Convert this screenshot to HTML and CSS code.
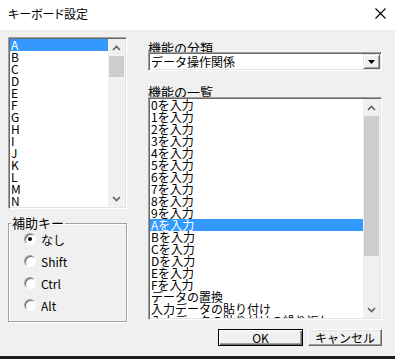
FILE: index.html
```html
<!DOCTYPE html>
<html lang="ja">
  <head>
    <meta charset="UTF-8" />
    <title>キーボード設定</title>
    <link rel="stylesheet" href="styles.css">
  </head>
  <body>
    <div class="window">
      <div class="titlebar">
        <span class="title">キーボード設定</span>
        <svg class="close" width="11" height="11" viewBox="0 0 11 11">
          <path d="M0.5 0.5 L10.5 10.5 M10.5 0.5 L0.5 10.5" stroke="#000" stroke-width="1.1" fill="none" />
        </svg>
      </div>

      <div class="client">
        <div class="left-col">
          <div class="listbox key-list">
            <ul class="items">
              <li class="selected">A</li>
              <li>B</li>
              <li>C</li>
              <li>D</li>
              <li>E</li>
              <li>F</li>
              <li>G</li>
              <li>H</li>
              <li>I</li>
              <li>J</li>
              <li>K</li>
              <li>L</li>
              <li>M</li>
              <li>N</li>
            </ul>
            <div class="vscroll">
              <div class="arrow">
                <svg width="9" height="6" viewBox="0 0 9 6"><path d="M1 5 L4.5 1.5 L8 5" stroke="#606060" stroke-width="1.6" fill="none" /></svg>
              </div>
              <div class="thumb"></div>
              <div class="track-rest"></div>
              <div class="arrow">
                <svg width="9" height="6" viewBox="0 0 9 6"><path d="M1 1 L4.5 4.5 L8 1" stroke="#606060" stroke-width="1.6" fill="none" /></svg>
              </div>
            </div>
          </div>

          <fieldset class="group">
            <legend>補助キー</legend>
            <div class="radios">
              <label class="radio-row"><span class="radio checked"></span>なし</label>
              <label class="radio-row"><span class="radio"></span>Shift</label>
              <label class="radio-row"><span class="radio"></span>Ctrl</label>
              <label class="radio-row"><span class="radio"></span>Alt</label>
            </div>
          </fieldset>
        </div>

        <div class="right-col">
          <div class="field-label">機能の分類</div>
          <div class="combo">
            <span class="combo-text">データ操作関係</span>
            <span class="combo-btn">
              <svg width="7" height="4" viewBox="0 0 7 4"><path d="M0 0 H7 L3.5 4 Z" fill="#000" /></svg>
            </span>
          </div>

          <div class="field-label second">機能の一覧</div>
          <div class="listbox func-list">
            <ul class="items">
              <li>0を入力</li>
              <li>1を入力</li>
              <li>2を入力</li>
              <li>3を入力</li>
              <li>4を入力</li>
              <li>5を入力</li>
              <li>6を入力</li>
              <li>7を入力</li>
              <li>8を入力</li>
              <li>9を入力</li>
              <li class="selected">Aを入力</li>
              <li>Bを入力</li>
              <li>Cを入力</li>
              <li>Dを入力</li>
              <li>Eを入力</li>
              <li>Fを入力</li>
              <li>データの置換</li>
              <li>入力データの貼り付け</li>
              <li>入力データの貼り付けの繰り返し</li>
            </ul>
            <div class="vscroll">
              <div class="arrow">
                <svg width="9" height="6" viewBox="0 0 9 6"><path d="M1 5 L4.5 1.5 L8 5" stroke="#606060" stroke-width="1.6" fill="none" /></svg>
              </div>
              <div class="thumb"></div>
              <div class="track-rest"></div>
              <div class="arrow">
                <svg width="9" height="6" viewBox="0 0 9 6"><path d="M1 1 L4.5 4.5 L8 1" stroke="#606060" stroke-width="1.6" fill="none" /></svg>
              </div>
            </div>
          </div>

          <div class="buttons">
            <button class="btn btn-ok">OK</button>
            <button class="btn btn-cancel">キャンセル</button>
          </div>
        </div>
      </div>
    </div>
  </body>
</html>
```

FILE: styles.css
```css
/* Reset */
* {
  margin: 0;
  padding: 0;
  box-sizing: border-box;
}

body {
  width: 395px;
  height: 359px;
  overflow: hidden;
  font-family: "Noto Sans CJK JP", sans-serif;
  color: #000;
}

.window {
  display: flex;
  flex-direction: column;
  height: 359px;
  background: #f0f0f0;
  border-bottom: 3px solid #1e1e1e;
}

/* Title bar */
.titlebar {
  height: 30px;
  background: #fff;
  display: flex;
  align-items: center;
  justify-content: space-between;
  padding: 0 9px 3px 8px;
}

.title {
  font-size: 12px;
  font-feature-settings: "palt";
}

/* Client area */
.client {
  flex: 1;
  display: flex;
  gap: 21px;
  padding: 7px 13px 0 8px;
}

.left-col {
  width: 119px;
  display: flex;
  flex-direction: column;
}

.right-col {
  flex: 1;
  display: flex;
  flex-direction: column;
}

/* Sunken list boxes */
.listbox {
  display: flex;
  background: #fff;
  border: 1px solid;
  border-color: #a0a0a0 #fff #fff #a0a0a0;
  box-shadow: inset 1px 1px #696969, inset -1px -1px #e3e3e3;
  padding: 1px;
  overflow: hidden;
}

.key-list {
  height: 172px;
}

.func-list {
  height: 223px;
}

.items {
  flex: 1;
  list-style: none;
  overflow: hidden;
  font-size: 12px;
  line-height: 12px;
}

.items li {
  height: 12px;
  padding-left: 1px;
  white-space: nowrap;
}

.items li.selected {
  background: #3399ff;
  color: #fff;
}

.vscroll {
  width: 17px;
  flex-shrink: 0;
  background: #f0f0f0;
  display: flex;
  flex-direction: column;
}

.arrow {
  height: 17px;
  display: flex;
  align-items: center;
  justify-content: center;
}

.thumb {
  margin: 0 1px;
  background: #cdcdcd;
}

.key-list .thumb {
  height: 21px;
}

.func-list .thumb {
  height: 140px;
}

.track-rest {
  flex: 1;
}

/* Group box */
.group {
  margin-top: 7px;
  height: 106px;
  border: 1px solid #a0a0a0;
  box-shadow: inset 1px 1px #fff, 1px 1px #fff;
  padding: 0 0 0 2px;
}

.group legend {
  font-size: 13px;
  line-height: 14px;
  padding: 0 1px;
}

.radios {
  margin-top: -2px;
  padding-left: 13px;
}

.radio-row {
  display: flex;
  align-items: center;
  gap: 5px;
  height: 22px;
  font-size: 12px;
}

.radio {
  width: 12px;
  height: 12px;
  border-radius: 50%;
  border: 1px solid;
  border-color: #a0a0a0 #fff #fff #a0a0a0;
  background: #fff;
  box-shadow: inset 1px 1px #696969;
  display: flex;
  align-items: center;
  justify-content: center;
}

.radio.checked::after {
  content: "";
  width: 4px;
  height: 4px;
  border-radius: 50%;
  background: #000;
}

/* Right side */
.field-label {
  font-size: 13px;
  line-height: 16px;
  height: 12px;
  margin-top: 3px;
}

.field-label.second {
  margin-top: 13px;
  margin-bottom: 1px;
}

.combo {
  display: flex;
  align-items: center;
  height: 19px;
  background: #fff;
  border: 1px solid;
  border-color: #a0a0a0 #fff #fff #a0a0a0;
  box-shadow: inset 1px 1px #696969, inset -1px -1px #e3e3e3;
  padding: 1px;
}

.combo-text {
  flex: 1;
  font-size: 12px;
  line-height: 15px;
  padding-left: 1px;
}

.combo-btn {
  width: 17px;
  height: 15px;
  background: #f0f0f0;
  border: 1px solid;
  border-color: #e3e3e3 #696969 #696969 #e3e3e3;
  box-shadow: inset 1px 1px #fff, inset -1px -1px #a0a0a0;
  display: flex;
  align-items: center;
  justify-content: center;
}

/* Buttons */
.buttons {
  display: flex;
  justify-content: flex-end;
  gap: 5px;
  margin-top: 9px;
}

.btn {
  height: 17px;
  font-family: "Noto Sans CJK JP", sans-serif;
  font-size: 12px;
  line-height: 13px;
  background: #f0f0f0;
  border: 1px solid;
  border-color: #fff #696969 #696969 #fff;
  box-shadow: inset -1px -1px #a0a0a0, inset 1px 1px #e3e3e3;
  color: #000;
}

.btn-ok {
  width: 85px;
  border-color: #000;
  box-shadow: inset 1px 1px #fff, inset -1px -1px #696969, inset -2px -2px #a0a0a0;
}

.btn-cancel {
  width: 74px;
}
```
